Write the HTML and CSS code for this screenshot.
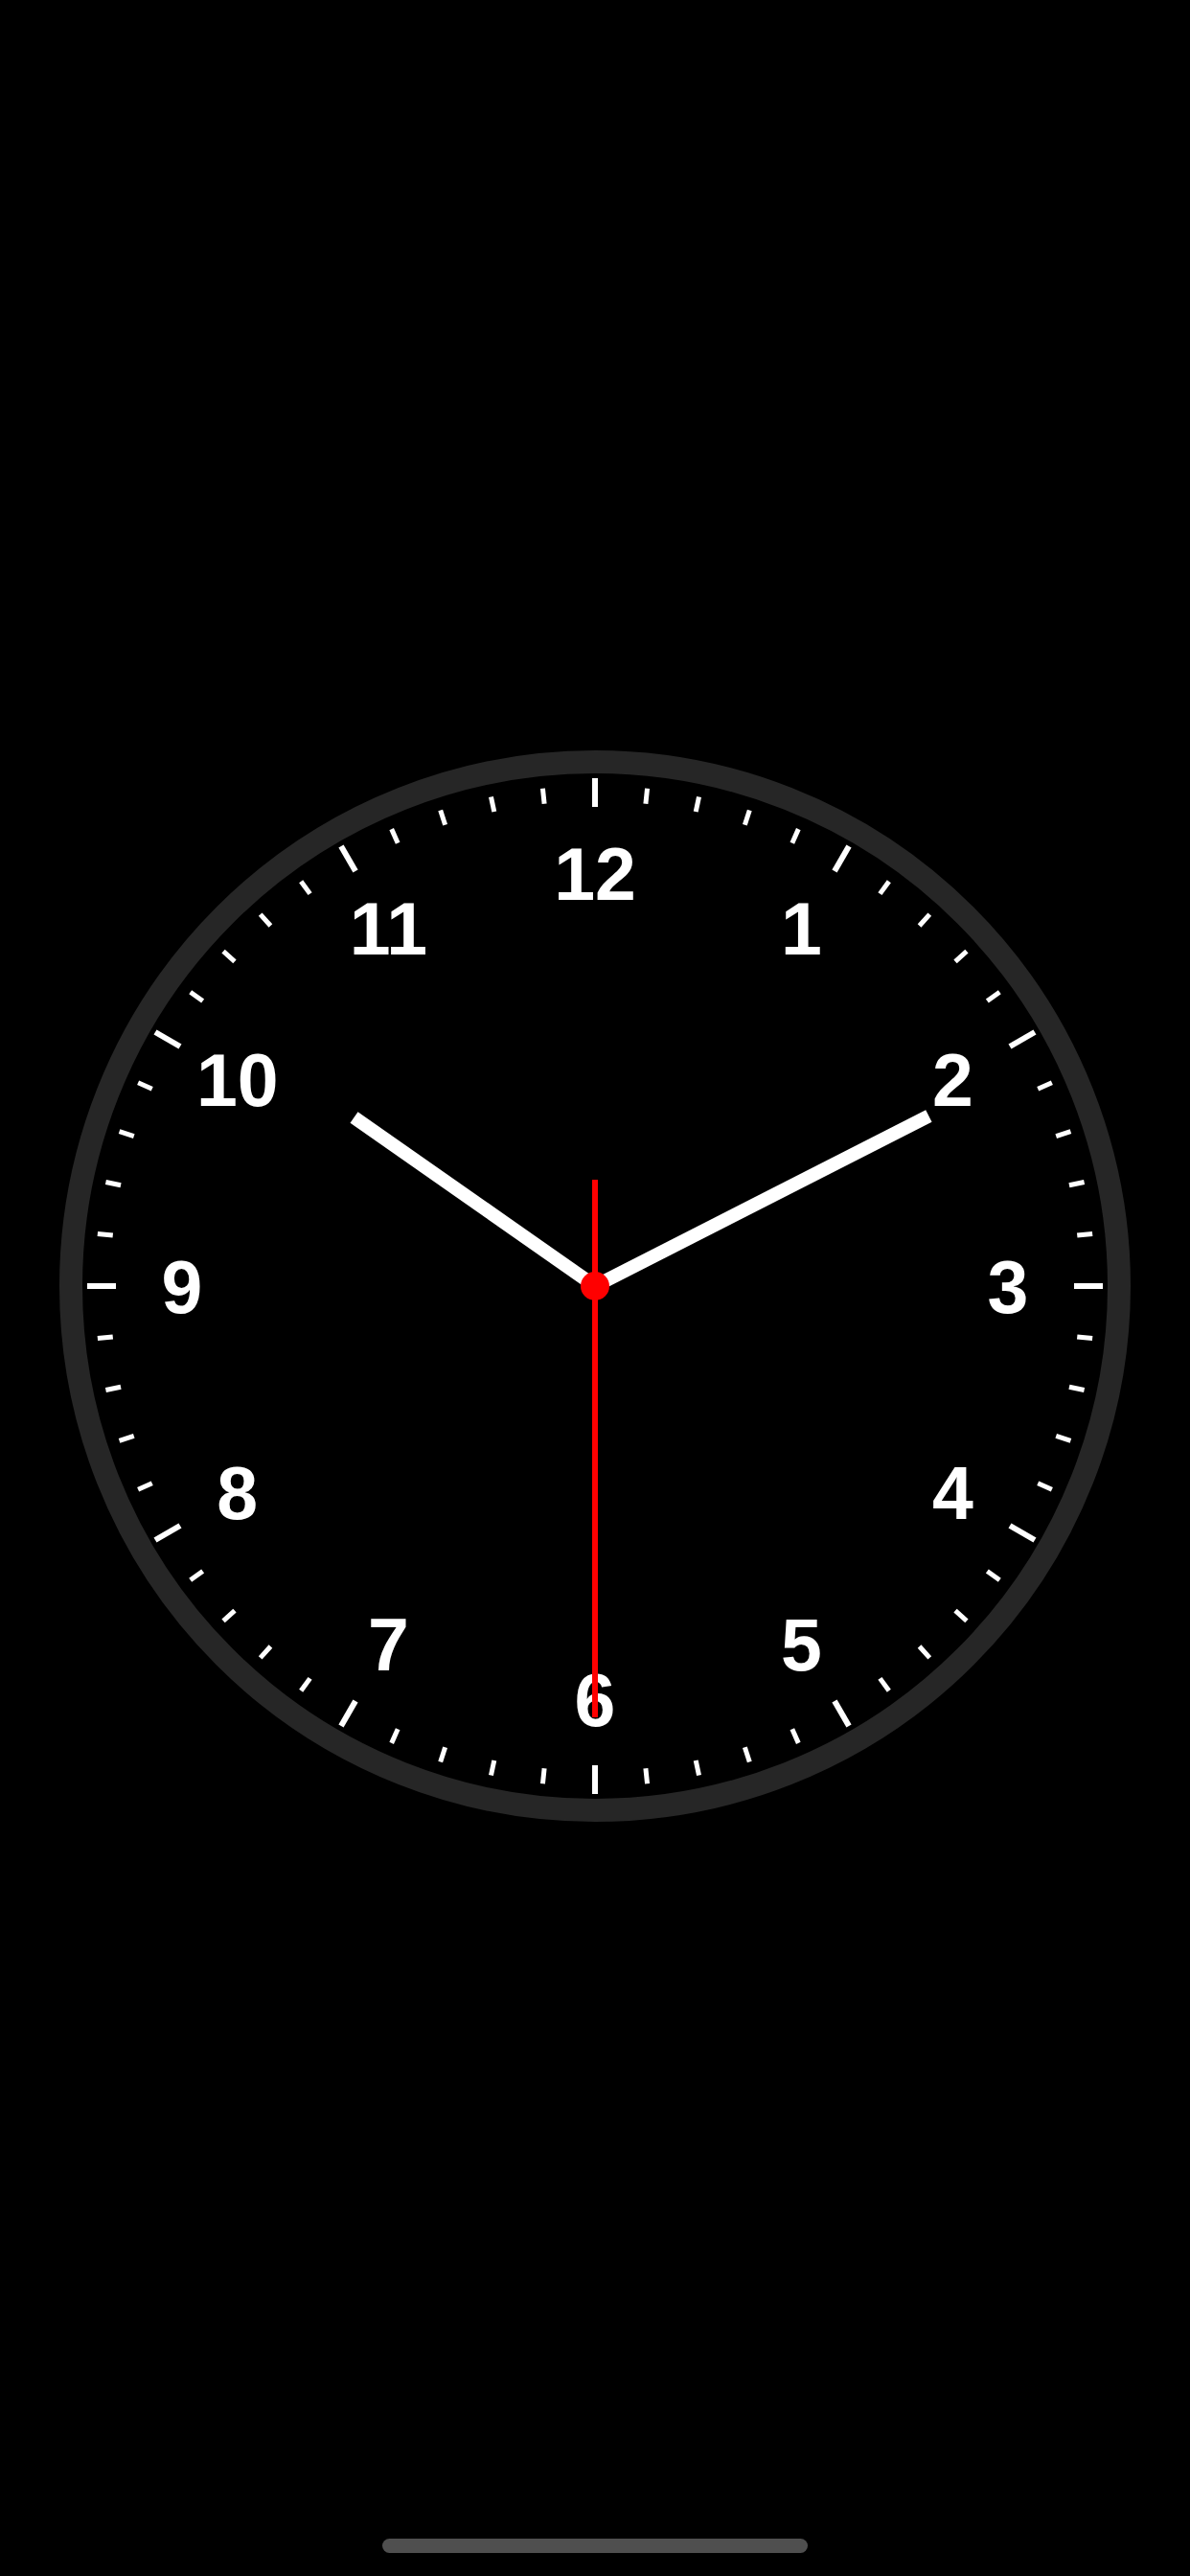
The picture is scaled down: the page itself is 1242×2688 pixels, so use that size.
FILE: index.html
```html
<!DOCTYPE html>
<html lang="en">
<head>
<meta charset="utf-8">
<title>Clock</title>
<link rel="stylesheet" href="styles.css">
</head>
<body>
<main class="screen">
  <section class="clock-area">
    <svg class="clock" viewBox="-562 -562 1124 1124" width="1124" height="1124" aria-label="Analog clock showing 10:10:30">
      <circle class="ring" cx="0" cy="0" r="547"/>
      <g class="ticks">
        <line class="tick major" x1="0" y1="-530" x2="0" y2="-500" transform="rotate(0)"/>
        <line class="tick minor" x1="0" y1="-522" x2="0" y2="-506" transform="rotate(6)"/>
        <line class="tick minor" x1="0" y1="-522" x2="0" y2="-506" transform="rotate(12)"/>
        <line class="tick minor" x1="0" y1="-522" x2="0" y2="-506" transform="rotate(18)"/>
        <line class="tick minor" x1="0" y1="-522" x2="0" y2="-506" transform="rotate(24)"/>
        <line class="tick major" x1="0" y1="-530" x2="0" y2="-500" transform="rotate(30)"/>
        <line class="tick minor" x1="0" y1="-522" x2="0" y2="-506" transform="rotate(36)"/>
        <line class="tick minor" x1="0" y1="-522" x2="0" y2="-506" transform="rotate(42)"/>
        <line class="tick minor" x1="0" y1="-522" x2="0" y2="-506" transform="rotate(48)"/>
        <line class="tick minor" x1="0" y1="-522" x2="0" y2="-506" transform="rotate(54)"/>
        <line class="tick major" x1="0" y1="-530" x2="0" y2="-500" transform="rotate(60)"/>
        <line class="tick minor" x1="0" y1="-522" x2="0" y2="-506" transform="rotate(66)"/>
        <line class="tick minor" x1="0" y1="-522" x2="0" y2="-506" transform="rotate(72)"/>
        <line class="tick minor" x1="0" y1="-522" x2="0" y2="-506" transform="rotate(78)"/>
        <line class="tick minor" x1="0" y1="-522" x2="0" y2="-506" transform="rotate(84)"/>
        <line class="tick major" x1="0" y1="-530" x2="0" y2="-500" transform="rotate(90)"/>
        <line class="tick minor" x1="0" y1="-522" x2="0" y2="-506" transform="rotate(96)"/>
        <line class="tick minor" x1="0" y1="-522" x2="0" y2="-506" transform="rotate(102)"/>
        <line class="tick minor" x1="0" y1="-522" x2="0" y2="-506" transform="rotate(108)"/>
        <line class="tick minor" x1="0" y1="-522" x2="0" y2="-506" transform="rotate(114)"/>
        <line class="tick major" x1="0" y1="-530" x2="0" y2="-500" transform="rotate(120)"/>
        <line class="tick minor" x1="0" y1="-522" x2="0" y2="-506" transform="rotate(126)"/>
        <line class="tick minor" x1="0" y1="-522" x2="0" y2="-506" transform="rotate(132)"/>
        <line class="tick minor" x1="0" y1="-522" x2="0" y2="-506" transform="rotate(138)"/>
        <line class="tick minor" x1="0" y1="-522" x2="0" y2="-506" transform="rotate(144)"/>
        <line class="tick major" x1="0" y1="-530" x2="0" y2="-500" transform="rotate(150)"/>
        <line class="tick minor" x1="0" y1="-522" x2="0" y2="-506" transform="rotate(156)"/>
        <line class="tick minor" x1="0" y1="-522" x2="0" y2="-506" transform="rotate(162)"/>
        <line class="tick minor" x1="0" y1="-522" x2="0" y2="-506" transform="rotate(168)"/>
        <line class="tick minor" x1="0" y1="-522" x2="0" y2="-506" transform="rotate(174)"/>
        <line class="tick major" x1="0" y1="-530" x2="0" y2="-500" transform="rotate(180)"/>
        <line class="tick minor" x1="0" y1="-522" x2="0" y2="-506" transform="rotate(186)"/>
        <line class="tick minor" x1="0" y1="-522" x2="0" y2="-506" transform="rotate(192)"/>
        <line class="tick minor" x1="0" y1="-522" x2="0" y2="-506" transform="rotate(198)"/>
        <line class="tick minor" x1="0" y1="-522" x2="0" y2="-506" transform="rotate(204)"/>
        <line class="tick major" x1="0" y1="-530" x2="0" y2="-500" transform="rotate(210)"/>
        <line class="tick minor" x1="0" y1="-522" x2="0" y2="-506" transform="rotate(216)"/>
        <line class="tick minor" x1="0" y1="-522" x2="0" y2="-506" transform="rotate(222)"/>
        <line class="tick minor" x1="0" y1="-522" x2="0" y2="-506" transform="rotate(228)"/>
        <line class="tick minor" x1="0" y1="-522" x2="0" y2="-506" transform="rotate(234)"/>
        <line class="tick major" x1="0" y1="-530" x2="0" y2="-500" transform="rotate(240)"/>
        <line class="tick minor" x1="0" y1="-522" x2="0" y2="-506" transform="rotate(246)"/>
        <line class="tick minor" x1="0" y1="-522" x2="0" y2="-506" transform="rotate(252)"/>
        <line class="tick minor" x1="0" y1="-522" x2="0" y2="-506" transform="rotate(258)"/>
        <line class="tick minor" x1="0" y1="-522" x2="0" y2="-506" transform="rotate(264)"/>
        <line class="tick major" x1="0" y1="-530" x2="0" y2="-500" transform="rotate(270)"/>
        <line class="tick minor" x1="0" y1="-522" x2="0" y2="-506" transform="rotate(276)"/>
        <line class="tick minor" x1="0" y1="-522" x2="0" y2="-506" transform="rotate(282)"/>
        <line class="tick minor" x1="0" y1="-522" x2="0" y2="-506" transform="rotate(288)"/>
        <line class="tick minor" x1="0" y1="-522" x2="0" y2="-506" transform="rotate(294)"/>
        <line class="tick major" x1="0" y1="-530" x2="0" y2="-500" transform="rotate(300)"/>
        <line class="tick minor" x1="0" y1="-522" x2="0" y2="-506" transform="rotate(306)"/>
        <line class="tick minor" x1="0" y1="-522" x2="0" y2="-506" transform="rotate(312)"/>
        <line class="tick minor" x1="0" y1="-522" x2="0" y2="-506" transform="rotate(318)"/>
        <line class="tick minor" x1="0" y1="-522" x2="0" y2="-506" transform="rotate(324)"/>
        <line class="tick major" x1="0" y1="-530" x2="0" y2="-500" transform="rotate(330)"/>
        <line class="tick minor" x1="0" y1="-522" x2="0" y2="-506" transform="rotate(336)"/>
        <line class="tick minor" x1="0" y1="-522" x2="0" y2="-506" transform="rotate(342)"/>
        <line class="tick minor" x1="0" y1="-522" x2="0" y2="-506" transform="rotate(348)"/>
        <line class="tick minor" x1="0" y1="-522" x2="0" y2="-506" transform="rotate(354)"/>
      </g>
      <g class="numerals">
        <text class="numeral" x="215.5" y="-345.8">1</text>
        <text class="numeral" x="373.3" y="-188">2</text>
        <text class="numeral" x="431" y="27.5">3</text>
        <text class="numeral" x="373.3" y="243">4</text>
        <text class="numeral" x="215.5" y="400.8">5</text>
        <text class="numeral" x="0" y="458.5">6</text>
        <text class="numeral" x="-215.5" y="400.8">7</text>
        <text class="numeral" x="-373.3" y="243">8</text>
        <text class="numeral" x="-431" y="27.5">9</text>
        <text class="numeral" x="-373.3" y="-188">10</text>
        <text class="numeral" x="-215.5" y="-345.8">11</text>
        <text class="numeral" x="0" y="-403.5">12</text>
      </g>
      <line class="hand hand-hour" x1="0" y1="0" x2="0" y2="-307" transform="rotate(305)"/>
      <line class="hand hand-minute" x1="0" y1="0" x2="0" y2="-391" transform="rotate(63)"/>
      <line class="hand hand-second" x1="0" y1="111" x2="0" y2="-450" transform="rotate(180)"/>
      <circle class="hub" cx="0" cy="0" r="15"/>
    </svg>
  </section>
  <div class="home-bar"></div>
</main>
</body>
</html>
```
FILE: styles.css
```css
html, body {
  margin: 0;
  padding: 0;
  background: #000;
}

body {
  font-family: "Liberation Sans", Arial, sans-serif;
}

.screen {
  width: 1242px;
  height: 2688px;
  display: flex;
  flex-direction: column;
  align-items: center;
  background: #000;
}

.clock-area {
  padding-top: 780px;
  display: flex;
  justify-content: center;
  width: 100%;
}

.clock {
  display: block;
  width: 1124px;
  height: 1124px;
}

.ring {
  fill: none;
  stroke: #262626;
  stroke-width: 24;
}

.tick {
  stroke: #fff;
  stroke-linecap: butt;
}

.tick.major {
  stroke-width: 6;
}

.tick.minor {
  stroke-width: 5;
}

.numeral {
  fill: #fff;
  font-family: "Liberation Sans", Arial, sans-serif;
  font-weight: 700;
  font-size: 77px;
  text-anchor: middle;
}

.hand {
  stroke-linecap: butt;
}

.hand-hour,
.hand-minute {
  stroke: #fff;
  stroke-width: 14;
}

.hand-second {
  stroke: #ff0000;
  stroke-width: 6;
}

.hub {
  fill: #ff0000;
}

.home-bar {
  margin-top: auto;
  margin-bottom: 24px;
  width: 444px;
  height: 15px;
  border-radius: 8px;
  background: #4f4f4f;
}
```
